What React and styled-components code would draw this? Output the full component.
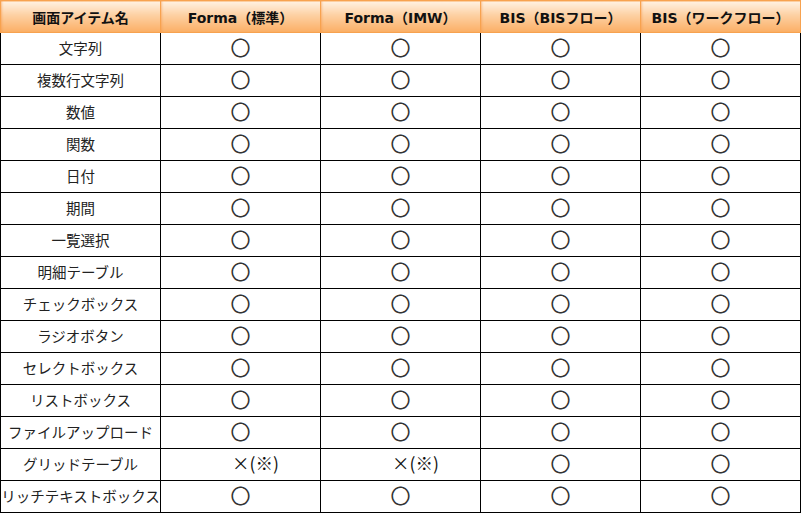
import React from 'react';
import styled, { createGlobalStyle } from 'styled-components';

const GlobalStyle = createGlobalStyle`
  html, body {
    margin: 0;
    padding: 0;
    background: #ffffff;
  }
  body {
    font-family: "DejaVu Sans", "Noto Sans CJK JP", sans-serif;
  }
`;

const Table = styled.table`
  border-collapse: collapse;
  table-layout: fixed;
  width: 801px;
`;

const HeadCell = styled.th`
  height: 31px;
  padding: 0;
  border: 1px solid #f7a24f;
  background: linear-gradient(to bottom, #fff1e2 0%, #fdd0a2 45%, #fbae64 100%);
  box-shadow: inset 2px 0 2px -1px rgba(247, 150, 70, 0.5);
  font-size: 14px;
  font-weight: bold;
  color: #111;
  text-align: center;
  white-space: nowrap;
`;

const Cell = styled.td`
  height: 29px;
  padding: 0 0 2px;
  border: 1px solid #000;
  border-top: ${(p) => (p.first ? 'none' : '1px solid #000')};
  text-align: center;
  font-family: "Noto Sans CJK JP", sans-serif;
  font-size: 14.5px;
  line-height: 1.2;
  color: #222;
  white-space: nowrap;
  overflow: hidden;
`;

const Mark = styled.span`
  display: inline-block;
  font-family: "Noto Sans CJK JP", sans-serif;
  font-size: 20px;
  line-height: 1;
  color: #333;
  transform: translateY(1px);
`;

const CrossMark = styled(Mark)`
  font-size: 17.5px;
  color: #111;
  margin-left: 30px;
  transform: translateY(0);
`;

const headers = [
  '画面アイテム名',
  'Forma（標準）',
  'Forma（IMW）',
  'BIS（BISフロー）',
  'BIS（ワークフロー）',
];

const rows = [
  ['文字列', 'o', 'o', 'o', 'o'],
  ['複数行文字列', 'o', 'o', 'o', 'o'],
  ['数値', 'o', 'o', 'o', 'o'],
  ['関数', 'o', 'o', 'o', 'o'],
  ['日付', 'o', 'o', 'o', 'o'],
  ['期間', 'o', 'o', 'o', 'o'],
  ['一覧選択', 'o', 'o', 'o', 'o'],
  ['明細テーブル', 'o', 'o', 'o', 'o'],
  ['チェックボックス', 'o', 'o', 'o', 'o'],
  ['ラジオボタン', 'o', 'o', 'o', 'o'],
  ['セレクトボックス', 'o', 'o', 'o', 'o'],
  ['リストボックス', 'o', 'o', 'o', 'o'],
  ['ファイルアップロード', 'o', 'o', 'o', 'o'],
  ['グリッドテーブル', 'x', 'x', 'o', 'o'],
  ['リッチテキストボックス', 'o', 'o', 'o', 'o'],
];

function renderMark(v) {
  if (v === 'x') return <CrossMark>×(※)</CrossMark>;
  return <Mark>〇</Mark>;
}

function App() {
  return (
    <>
      <GlobalStyle />
      <Table>
        <colgroup>
          {headers.map((h) => (
            <col key={h} style={{ width: '160px' }} />
          ))}
        </colgroup>
        <thead>
          <tr>
            {headers.map((h) => (
              <HeadCell key={h}>{h}</HeadCell>
            ))}
          </tr>
        </thead>
        <tbody>
          {rows.map((row, i) => (
            <tr key={row[0]}>
              <Cell first={i === 0}>{row[0]}</Cell>
              {row.slice(1).map((v, j) => (
                <Cell key={j} first={i === 0}>
                  {renderMark(v)}
                </Cell>
              ))}
            </tr>
          ))}
        </tbody>
      </Table>
    </>
  );
}

export default App;
